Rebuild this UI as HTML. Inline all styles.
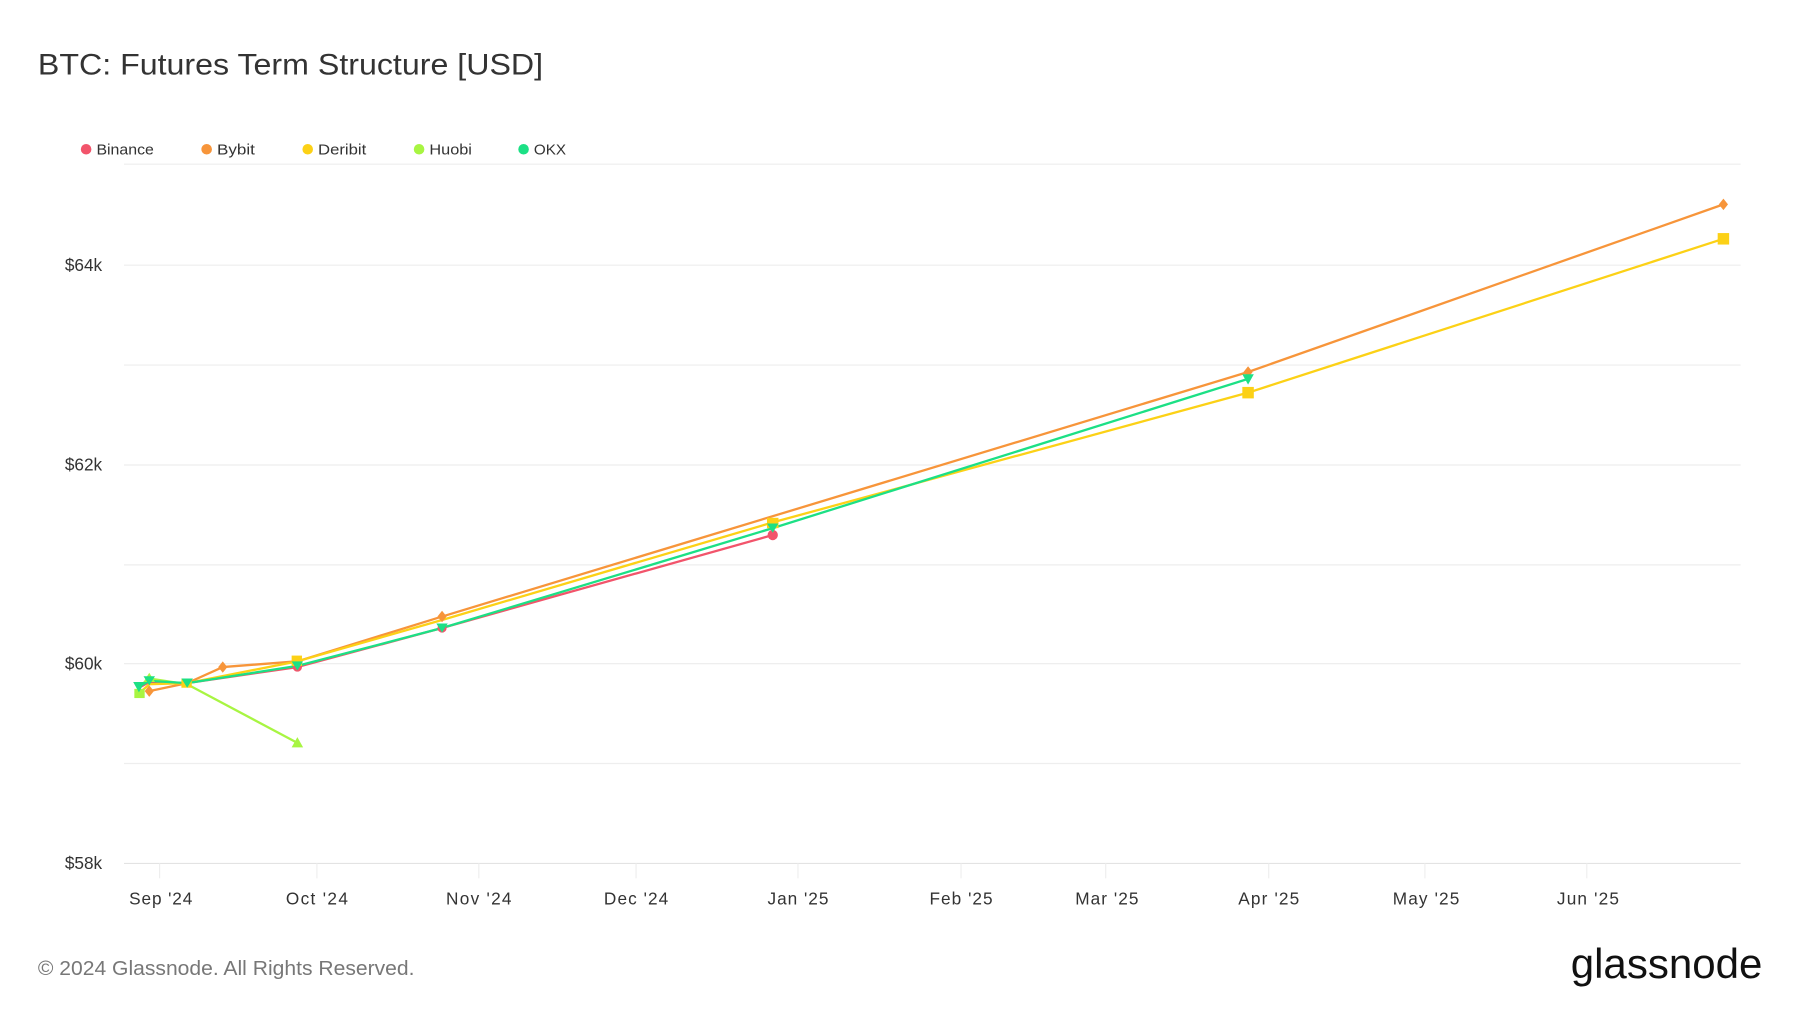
<!DOCTYPE html>
<html><head><meta charset="utf-8"><style>
html,body{margin:0;padding:0;background:#fff;width:1800px;height:1013px;overflow:hidden}
svg{display:block}
text{font-family:"Liberation Sans",sans-serif}
</style></head><body>
<svg width="1800" height="1013" viewBox="0 0 1567.7 882.3" preserveAspectRatio="none">
<text x="33" y="65" font-size="26" fill="#333" textLength="440" lengthAdjust="spacingAndGlyphs">BTC: Futures Term Structure [USD]</text>
<g font-size="13" fill="#333">
<circle cx="75" cy="130" r="4.6" fill="#f2546b"/><text x="84" y="134.5" textLength="50" lengthAdjust="spacingAndGlyphs">Binance</text>
<circle cx="180" cy="130" r="4.6" fill="#f7953a"/><text x="189" y="134.5" textLength="33" lengthAdjust="spacingAndGlyphs">Bybit</text>
<circle cx="268" cy="130" r="4.6" fill="#fcd116"/><text x="277" y="134.5" textLength="42" lengthAdjust="spacingAndGlyphs">Deribit</text>
<circle cx="365" cy="130" r="4.6" fill="#a8f542"/><text x="374" y="134.5" textLength="37" lengthAdjust="spacingAndGlyphs">Huobi</text>
<circle cx="456" cy="130" r="4.6" fill="#1ce085"/><text x="465" y="134.5" textLength="28" lengthAdjust="spacingAndGlyphs">OKX</text>
</g>
<g stroke="#eeeeee" stroke-width="1">
<line x1="108" x2="1516" y1="143" y2="143"/>
<line x1="108" x2="1516" y1="231" y2="231"/>
<line x1="108" x2="1516" y1="318" y2="318"/>
<line x1="108" x2="1516" y1="405" y2="405"/>
<line x1="108" x2="1516" y1="492" y2="492"/>
<line x1="108" x2="1516" y1="578" y2="578"/>
<line x1="108" x2="1516" y1="665" y2="665"/>
<line x1="108" x2="1516" y1="752" y2="752" stroke="#e3e3e3"/>
<line x1="139" x2="139" y1="752" y2="765"/><line x1="276" x2="276" y1="752" y2="765"/>
<line x1="417" x2="417" y1="752" y2="765"/><line x1="554" x2="554" y1="752" y2="765"/>
<line x1="695" x2="695" y1="752" y2="765"/><line x1="837" x2="837" y1="752" y2="765"/>
<line x1="963" x2="963" y1="752" y2="765"/><line x1="1105" x2="1105" y1="752" y2="765"/>
<line x1="1241" x2="1241" y1="752" y2="765"/><line x1="1382" x2="1382" y1="752" y2="765"/>
</g>
<g font-size="15" fill="#333" text-anchor="end">
<text x="89" y="236">$64k</text><text x="89" y="410">$62k</text>
<text x="89" y="583">$60k</text><text x="89" y="757">$58k</text>
</g>
<g font-size="15" fill="#333" text-anchor="middle" lengthAdjust="spacingAndGlyphs">
<text x="140" y="788" textLength="55">Sep '24</text><text x="276" y="788" textLength="54">Oct '24</text>
<text x="417" y="788" textLength="57">Nov '24</text><text x="554" y="788" textLength="56">Dec '24</text>
<text x="695" y="788" textLength="53">Jan '25</text><text x="837" y="788" textLength="55">Feb '25</text>
<text x="964" y="788" textLength="55">Mar '25</text><text x="1105" y="788" textLength="53">Apr '25</text>
<text x="1242" y="788" textLength="58">May '25</text><text x="1383" y="788" textLength="54">Jun '25</text>
</g>
<g fill="none" stroke-width="2" stroke-linejoin="round">
<polyline stroke="#f2546b" points="121,599 130,594 163,595 259,581 385,547 673,466"/>
<polyline stroke="#a8f542" points="121,598 130,591 163,596 259,647"/>
<polyline stroke="#f7953a" points="130,602 163,595 194,581 259,576 385,537 1087,324 1501,178"/>
<polyline stroke="#fcd116" points="121,604 130,596 163,595 259,576 385,540 673,455 1087,342 1501,208"/>
<polyline stroke="#1ce085" points="121,598 130,593 163,595 259,580 385,547 673,460 1087,330"/>
</g>
<g fill="#f2546b"><circle cx="259" cy="581" r="4"/><circle cx="673" cy="466" r="4.5"/><circle cx="385" cy="547" r="4"/></g>
<g fill="#a8f542"><path d="M130,586l5,8h-10z"/><path d="M259,642l5,9h-10z"/><rect x="117" y="600" width="9" height="8"/></g>
<g fill="#f7953a"><path d="M130,597l4,5-4,5-4-5z"/><path d="M194,576l4,5-4,5-4-5z"/><path d="M385,532l4,5-4,5-4-5z"/><path d="M1087,319l4,5-4,5-4-5z"/><path d="M1501,173l4,5-4,5-4-5z"/></g>
<g fill="#fcd116"><rect x="254" y="571" width="9" height="9"/><rect x="158" y="591" width="9" height="8"/><rect x="668" y="451" width="10" height="9"/><rect x="1082" y="337" width="10" height="10"/><rect x="1496" y="203" width="10" height="10"/></g>
<g fill="#1ce085"><path d="M116,594h10l-5,9z"/><path d="M125,589h10l-5,8z"/><path d="M158,591h10l-5,8z"/><path d="M254,576h10l-5,8z"/><path d="M380,543h10l-5,8z"/><path d="M668,456h10l-5,8z"/><path d="M1082,326h10l-5,9z"/></g>
<text x="33" y="849" font-size="18" fill="#777" textLength="328" lengthAdjust="spacingAndGlyphs">© 2024 Glassnode. All Rights Reserved.</text>
<text x="1368" y="852" font-size="36" fill="#111" textLength="167" lengthAdjust="spacingAndGlyphs">glassnode</text>
</svg>
</body></html>
